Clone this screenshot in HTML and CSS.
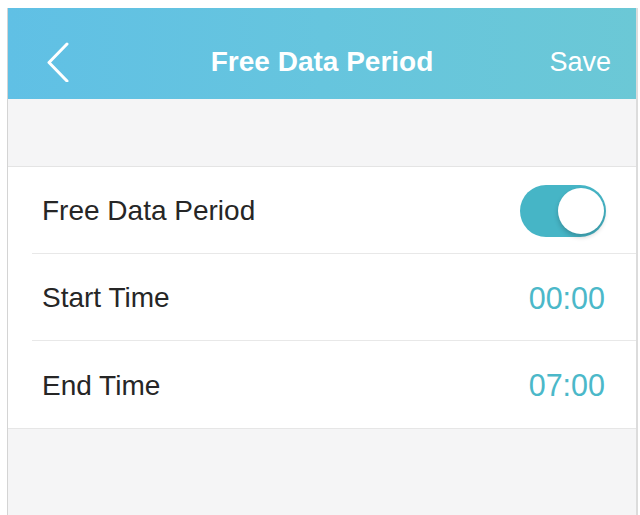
FILE: index.html
```html
<!DOCTYPE html>
<html>
<head>
<meta charset="utf-8">
<link rel="stylesheet" href="styles.css">
</head>
<body>
<div class="frame">
  <header class="nav">
    <div class="back">
      <svg width="24" height="40" viewBox="0 0 24 40"><path d="M21 2 L3 20.5 L21 39" fill="none" stroke="#fff" stroke-width="3" stroke-linecap="round" stroke-linejoin="round"/></svg>
    </div>
    <div class="title">Free Data Period</div>
    <div class="save">Save</div>
  </header>
  <div class="spacer"></div>
  <div class="list">
    <div class="row">
      <span class="label">Free Data Period</span>
      <span class="toggle"><span class="knob"></span></span>
    </div>
    <div class="row">
      <span class="label">Start Time</span>
      <span class="value">00:00</span>
    </div>
    <div class="row">
      <span class="label">End Time</span>
      <span class="value">07:00</span>
    </div>
  </div>
  <div class="bottom"></div>
</div>
</body>
</html>
```
FILE: styles.css
```css
html, body {
  margin: 0;
  padding: 0;
  background: #fff;
}
body {
  padding: 8px 2px 0 7px;
  font-family: "Liberation Sans", Arial, sans-serif;
}
.frame {
  border-left: 1px solid #d4d4d4;
  border-right: 2px solid #dcdcdc;
  height: 507px;
  display: flex;
  flex-direction: column;
  background: #f5f5f6;
}
.nav {
  height: 91px;
  box-sizing: border-box;
  padding-top: 17px;
  background: linear-gradient(90deg, #60c0e5 0%, #66c5de 50%, #6bc8d6 100%);
  display: grid;
  grid-template-columns: 1fr auto 1fr;
  align-items: center;
  color: #fff;
}
.back {
  width: 24px;
  height: 40px;
  margin-left: 38px;
  display: flex;
}
.title {
  text-align: center;
  font-weight: bold;
  font-size: 28px;
}
.save {
  justify-self: end;
  font-size: 27px;
  margin-right: 25px;
}
.spacer {
  height: 67px;
  border-bottom: 1px solid #e4e4e4;
}
.list {
  background: #fff;
  border-bottom: 1px solid #e6e6e6;
}
.row {
  height: 84px;
  padding-top: 2px;
  margin-left: 24px;
  padding-left: 10px;
  padding-right: 31px;
  display: flex;
  align-items: center;
  justify-content: space-between;
  border-bottom: 1px solid #e8e8e8;
}
.row:last-child {
  border-bottom: none;
  height: 85px;
}
.label {
  font-size: 28px;
  color: #262626;
}
.value {
  font-size: 30.5px;
  color: #4bb8c9;
}
.toggle {
  width: 86px;
  height: 52px;
  border-radius: 26px;
  background: #46b5c6;
  position: relative;
  margin-right: -1px;
}
.knob {
  position: absolute;
  right: 2px;
  top: 3px;
  width: 46px;
  height: 46px;
  border-radius: 50%;
  background: #fff;
  box-shadow: 0 3px 5px rgba(0,0,0,0.2);
}
.bottom {
  flex: 1;
}
```
